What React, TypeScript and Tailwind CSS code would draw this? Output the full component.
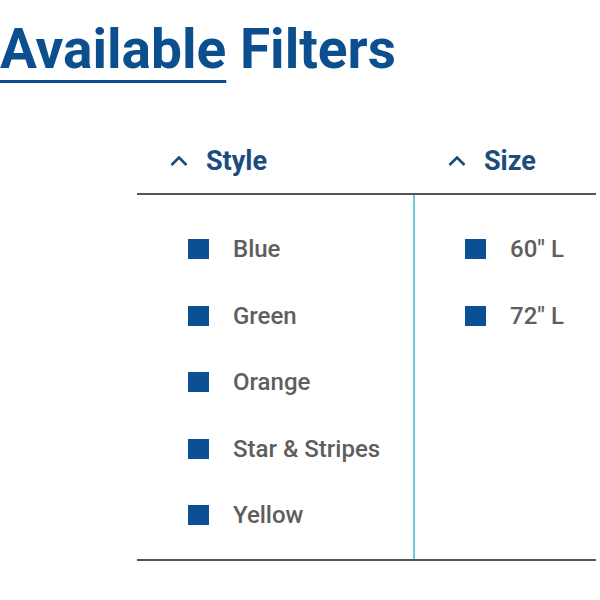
import React from "react";

const Caret = () => (
  <svg width="18" height="10" viewBox="0 0 18 10" fill="none" className="shrink-0">
    <polyline points="1.5,9 9,1.5 16.5,9" stroke="#1b4c7c" strokeWidth="2.6" strokeLinecap="butt" strokeLinejoin="miter" />
  </svg>
);

const Item = ({ label }: { label: string }) => (
  <div className="h-[66.5px] flex items-center">
    <div className="w-[21px] h-[20px] bg-[#0b4f94] shrink-0" />
    <span className="ml-[24px] text-[24px] leading-[28px] font-medium text-[#5e5e5e] whitespace-nowrap">{label}</span>
  </div>
);

export default function App() {
  const styles = ["Blue", "Green", "Orange", "Star & Stripes", "Yellow"];
  const sizes = ['60" L', '72" L'];
  return (
    <div className="w-[600px] h-[600px] bg-white overflow-hidden font-['Roboto',sans-serif]">
      <h1 className="pt-[21px] text-[55px] leading-[56px] font-bold text-[#0b4f8e] whitespace-nowrap">
        <span className="underline decoration-[3px] underline-offset-[12px]">Available</span> Filters
      </h1>
      <div className="ml-[137px] w-[459px] mt-[66px]">
        <div className="grid grid-cols-[276px_183px] border-b-2 border-[#555555]">
          <div className="flex items-center pl-[33px] pb-[15px] h-[50px]">
            <Caret />
            <span className="ml-[18px] text-[27px] leading-[32px] font-bold text-[#1b4c7c]">Style</span>
          </div>
          <div className="flex items-center pl-[35px] pb-[15px] h-[50px]">
            <Caret />
            <span className="ml-[18px] text-[27px] leading-[32px] font-bold text-[#1b4c7c]">Size</span>
          </div>
        </div>
        <div className="grid grid-cols-[276px_183px] border-b-2 border-[#555555]">
          <div className="pl-[51px] pt-[21px] pb-[10px]">
            {styles.map((s) => (
              <Item key={s} label={s} />
            ))}
          </div>
          <div className="border-l-2 border-[#6ccde0] pl-[50px] pt-[21px]">
            {sizes.map((s) => (
              <Item key={s} label={s} />
            ))}
          </div>
        </div>
      </div>
    </div>
  );
}
